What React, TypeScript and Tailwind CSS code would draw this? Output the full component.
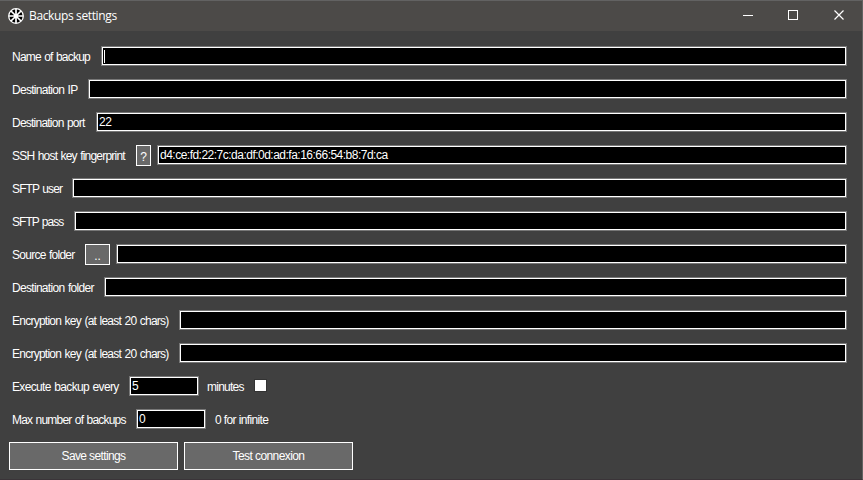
import type { ReactNode } from "react";

function Field({ className = "flex-1", value, caret }: { className?: string; value?: string; caret?: boolean }) {
  return (
    <div className={`h-5 border border-[#777] ${className}`}>
      <div className="flex h-full items-center border border-white bg-black pl-px text-[12px] leading-none whitespace-pre">
        {caret && <span className="h-[13px] w-px bg-white" />}
        {value && <span className="leading-[14px] tracking-[-0.51px]">{value}</span>}
      </div>
    </div>
  );
}

function Row({ label, width, tracking, children }: { label: string; width: string; tracking: string; children: ReactNode }) {
  return (
    <div className="flex h-[33px] items-start pr-[15px] pl-3">
      <div className={`shrink-0 pt-[4px] leading-[14px] [word-spacing:0.8px] whitespace-pre ${width} ${tracking}`}>{label}</div>
      {children}
    </div>
  );
}

export default function App() {
  return (
    <div className="flex h-[480px] w-[863px] flex-col overflow-hidden border-t border-r border-b border-[#626262] border-b-[#3a3438] bg-[#404040] font-['Liberation_Sans',Arial,sans-serif] text-[12px] text-white">
      <header className="flex h-[30px] shrink-0 items-center bg-[#4c4a48] pl-2">
        <svg width="16" height="16" viewBox="0 0 16 16">
          <circle cx="8" cy="8" r="7.3" fill="#000" stroke="#fff" strokeWidth="1.3" />
          <path d="M8 1v14M1 8h14M3 3l10 10M13 3L3 13" stroke="#fff" strokeWidth="1.7" />
          <circle cx="8" cy="8" r="2" fill="#fff" />
        </svg>
        <h1 className="ml-[5px] flex-1 font-['Open_Sans','Noto_Sans',sans-serif] text-[12px] leading-4 tracking-[-0.37px]">Backups settings</h1>
        <svg width="120" height="30" viewBox="0 0 120 30" fill="none" stroke="#fff" shapeRendering="crispEdges">
          <path d="M1 14.5h10M46.5 9.5h9v9h-9z" />
          <path d="M92.5 9.5l9 9M101.5 9.5l-9 9" shapeRendering="auto" strokeWidth="1.2" />
        </svg>
      </header>
      <main className="flex flex-col pt-[15px]">
        <Row label="Name of backup" width="w-[89px]" tracking="tracking-[-0.79px]"><Field caret /></Row>
        <Row label="Destination IP" width="w-[76px]" tracking="tracking-[-0.72px]"><Field /></Row>
        <Row label="Destination port" width="w-[84px]" tracking="tracking-[-0.77px]"><Field value="22" /></Row>
        <Row label="SSH host key fingerprint" width="w-[124px]" tracking="tracking-[-0.79px]">
          <button className="mr-[6px] h-[21px] w-[15px] border border-white bg-[#696969] pt-[3px] leading-none">?</button>
          <Field value="d4:ce:fd:22:7c:da:df:0d:ad:fa:16:66:54:b8:7d:ca" />
        </Row>
        <Row label="SFTP user" width="w-[60px]" tracking="tracking-[-0.86px]"><Field /></Row>
        <Row label="SFTP pass" width="w-[62px]" tracking="tracking-[-0.96px]"><Field /></Row>
        <Row label="Source folder" width="w-[73px]" tracking="tracking-[-0.74px]">
          <button className="mr-[6px] h-[21px] w-[25px] border border-white bg-[#696969] pt-[3px] leading-none">..</button>
          <Field />
        </Row>
        <Row label="Destination folder" width="w-[92px]" tracking="tracking-[-0.69px]"><Field /></Row>
        <Row label="Encryption key (at least 20 chars)" width="w-[167px]" tracking="tracking-[-0.75px]"><Field /></Row>
        <Row label="Encryption key (at least 20 chars)" width="w-[167px]" tracking="tracking-[-0.75px]"><Field /></Row>
        <Row label="Execute backup every" width="w-[117px]" tracking="tracking-[-0.65px]">
          <Field className="w-[70px]" value="5" />
          <span className="ml-2 w-[47px] pt-[4px] leading-[14px] tracking-[-0.75px]">minutes</span>
          <span className="mt-[3px] size-[13px] border border-[#333] bg-white" />
        </Row>
        <Row label="Max number of backups" width="w-[124px]" tracking="tracking-[-0.8px]">
          <Field className="w-[70px]" value="0" />
          <span className="ml-[9px] pt-[4px] leading-[14px] tracking-[-0.62px] whitespace-pre">0 for infinite</span>
        </Row>
        <div className="flex gap-[6px] pl-[9px]">
          <button className="h-7 w-[169px] border border-white bg-[#696969] tracking-[-0.62px]">Save settings</button>
          <button className="h-7 w-[169px] border border-white bg-[#696969] tracking-[-0.58px]">Test connexion</button>
        </div>
      </main>
    </div>
  );
}
